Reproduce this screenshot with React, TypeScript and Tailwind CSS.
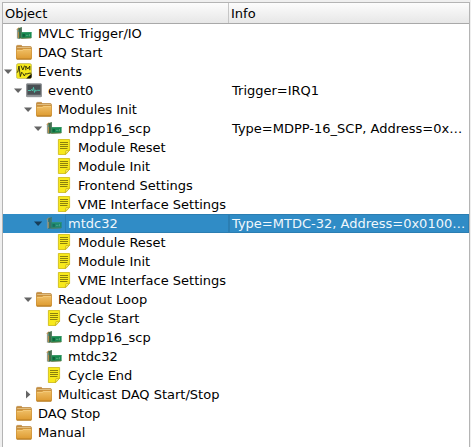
import React from "react";

type IconKind = "board" | "folder" | "vme" | "scope" | "script";

interface Row {
  level: number;
  icon: IconKind;
  label: string;
  info?: string;
  state?: "open" | "closed";
  selected?: boolean;
}

const rows: Row[] = [
  { level: 0, icon: "board", label: "MVLC Trigger/IO" },
  { level: 0, icon: "folder", label: "DAQ Start" },
  { level: 0, icon: "vme", label: "Events", state: "open" },
  { level: 1, icon: "scope", label: "event0", info: "Trigger=IRQ1", state: "open" },
  { level: 2, icon: "folder", label: "Modules Init", state: "open" },
  { level: 3, icon: "board", label: "mdpp16_scp", info: "Type=MDPP-16_SCP, Address=0x…", state: "open" },
  { level: 4, icon: "script", label: "Module Reset" },
  { level: 4, icon: "script", label: "Module Init" },
  { level: 4, icon: "script", label: "Frontend Settings" },
  { level: 4, icon: "script", label: "VME Interface Settings" },
  { level: 3, icon: "board", label: "mtdc32", info: "Type=MTDC-32, Address=0x0100…", state: "open", selected: true },
  { level: 4, icon: "script", label: "Module Reset" },
  { level: 4, icon: "script", label: "Module Init" },
  { level: 4, icon: "script", label: "VME Interface Settings" },
  { level: 2, icon: "folder", label: "Readout Loop", state: "open" },
  { level: 3, icon: "script", label: "Cycle Start" },
  { level: 3, icon: "board", label: "mdpp16_scp" },
  { level: 3, icon: "board", label: "mtdc32" },
  { level: 3, icon: "script", label: "Cycle End" },
  { level: 2, icon: "folder", label: "Multicast DAQ Start/Stop", state: "closed" },
  { level: 0, icon: "folder", label: "DAQ Stop" },
  { level: 0, icon: "folder", label: "Manual" },
];

const indents = ["pl-0", "pl-[10px]", "pl-[20px]", "pl-[30px]", "pl-[40px]"];

function Icon({ kind, selected }: { kind: IconKind; selected?: boolean }) {
  const cls = `mt-px h-4 w-4 shrink-0 ${selected ? "opacity-75" : ""}`;
  switch (kind) {
    case "folder":
      return (
        <svg viewBox="0 0 16 16" className={cls}>
          <defs>
            <linearGradient id="folderFront" x1="0" y1="0" x2="0" y2="1">
              <stop offset="0" stopColor="#f0c068" />
              <stop offset="1" stopColor="#dd9a30" />
            </linearGradient>
          </defs>
          <path d="M.5 14V2.3Q.5 1.4 1.4 1.4H5.4L6.6 2.6H14.4Q15.4 2.6 15.4 3.6V14Z" fill="#c58c3c" stroke="#b98238" strokeWidth=".7" />
          <path d="M1.2 3.6H14.8" stroke="#e6c890" strokeWidth=".9" />
          <path d="M.3 6.2Q.3 5.6 1.1 5.6H6L7 4.7H14.9Q15.7 4.7 15.7 5.4V14.4Q15.7 15.2 14.9 15.2H1.1Q.3 15.2.3 14.4Z" fill="url(#folderFront)" stroke="#cb8b2b" strokeWidth=".6" />
          <path d="M1.1 6.4H6.4L7.3 5.5H14.9" fill="none" stroke="#f9d994" strokeWidth=".6" />
          <path d="M.8 15.1H15.2" stroke="#a9701d" strokeWidth=".8" />
        </svg>
      );
    case "board":
      return (
        <svg viewBox="0 0 16 16" className={cls}>
          <path d="M1.5 5V13.6" stroke="#8f9c93" strokeWidth="1.2" />
          <path d="M.8 4.8L3.4 2.8" stroke="#c08f4c" strokeWidth="1.4" />
          <path d="M2.2 3.4L5.8 2.1V13.2L2.4 13.9Z" fill="#3c6b48" />
          <path d="M5.1 2.6V7.5" stroke="#5d7a63" strokeWidth="1" />
          <path d="M2.4 7V13" stroke="#b98d45" strokeWidth="1" />
          <path d="M5.5 7.3L15.6 7.1V13L5.5 13.4Z" fill="#178a50" />
          <path d="M5.8 7.7L15.3 7.5" stroke="#3b9865" strokeWidth=".7" />
          <path d="M6.6 9H8.9V11.8H6.6Z" fill="#12603c" />
          <path d="M10 10.4H12.4M13.5 9V11.2" stroke="#58a67a" strokeWidth=".9" />
          <path d="M5.2 13.3L15.2 12.9" stroke="#6c7040" strokeWidth=".9" />
        </svg>
      );
    case "script":
      return (
        <svg viewBox="0 0 16 16" className={cls}>
          <path d="M2.4.5H13.6V11.3L9.8 15.5H2.4Z" fill="#f8e91c" stroke="#cbb812" strokeWidth=".8" />
          <path d="M9.2 15.4L10 11.7L13.6 11.2Z" fill="#fdf580" stroke="#c4ae08" strokeWidth=".7" />
          <path d="M4 3.5H12M4 5.5H12M4 7.5H12M4 9.5H11.5" stroke="#8b800c" strokeWidth="1" />
        </svg>
      );
    case "vme":
      return (
        <svg viewBox="0 0 16 16" className={cls}>
          <rect x=".4" y=".6" width="15.2" height="15" rx="2" fill="#f5e91c" stroke="#b9b062" strokeWidth=".7" />
          <path d="M10.2 15.6L15.6 10.4V13.8Q15.6 15.6 14 15.6Z" fill="#111" />
          <path d="M5 2.6L6.8 7L8.6 2.6M9.8 7.2V3L11.8 6L13.8 3V7.2" fill="none" stroke="#38350c" strokeWidth="1" />
          <path d="M.8 9.5L1.8 9L3 3L4.3 13.6L5.7 9.2L7 10.7L8.4 13L9.5 10.6L11 11L13 10.2H15.2" fill="none" stroke="#29270a" strokeWidth=".9" />
        </svg>
      );
    case "scope":
      return (
        <svg viewBox="0 0 16 16" className={cls}>
          <rect x=".5" y="1.8" width="15" height="12.9" rx=".5" fill="#74787b" stroke="#94979a" />
          <rect x="1.5" y="2.9" width="13" height="9.7" fill="#4a5054" />
          <path d="M2 8.5H4.8L5.6 7.4L6.5 8.8L7.5 5.4L8.5 10.4L9.5 8L10.4 8.7L11.5 8.3H14" fill="none" stroke="#4fd0b4" strokeWidth=".9" />
          <path d="M1 13.6H15" stroke="#a5a8a9" strokeWidth=".6" />
        </svg>
      );
  }
}

function Arrow({ state, selected }: { state?: Row["state"]; selected?: boolean }) {
  return (
    <svg viewBox="0 0 13 19" className="h-[19px] w-[13px] shrink-0">
      {state === "open" && <path d="M1 7.6H9.2L5.1 12Z" fill={selected ? "#173d58" : "#656565"} />}
      {state === "closed" && <path d="M3 5.4V13.6L7.4 9.5Z" fill="#656565" />}
    </svg>
  );
}

export default function App() {
  return (
    <div className="h-[447px] w-[471px] overflow-hidden bg-[#efefef] pl-[2px] pt-[2px] font-['DejaVu_Sans',sans-serif] text-[13px] leading-[19px] text-black">
      <div className="h-[445px] w-[468px] border-x border-t border-[#b4b4b4] bg-white">
        <div className="flex h-[21px] border-b border-[#a9a9a9] bg-linear-to-b from-[#fcfcfc] to-[#e7e7e7] leading-[21px]">
          <div className="w-[226px] border-r border-[#c6c6c6] pl-[2px]">Object</div>
          <div className="pl-[2px]">Info</div>
        </div>
        {rows.map((row, i) => (
          <div
            key={i}
            className={`flex h-[19px] whitespace-pre ${row.selected ? "bg-[#308cc6] text-[#eff7fc]" : ""}`}
          >
            <div className={`flex w-[226px] shrink-0 items-start ${indents[row.level]}`}>
              <Arrow state={row.state} selected={row.selected} />
              <Icon kind={row.icon} selected={row.selected} />
              <span
                className={`ml-[3px] h-[19px] pl-[3px] ${row.selected ? "flex-1 shadow-[inset_0_0_0_1px_#2b7eb2]" : ""}`}
              >
                {row.label}
              </span>
            </div>
            <div className={`min-w-0 flex-1 pl-[3px] ${row.selected ? "shadow-[inset_0_0_0_1px_#2b7eb2]" : ""}`}>{row.info}</div>
          </div>
        ))}
      </div>
    </div>
  );
}
